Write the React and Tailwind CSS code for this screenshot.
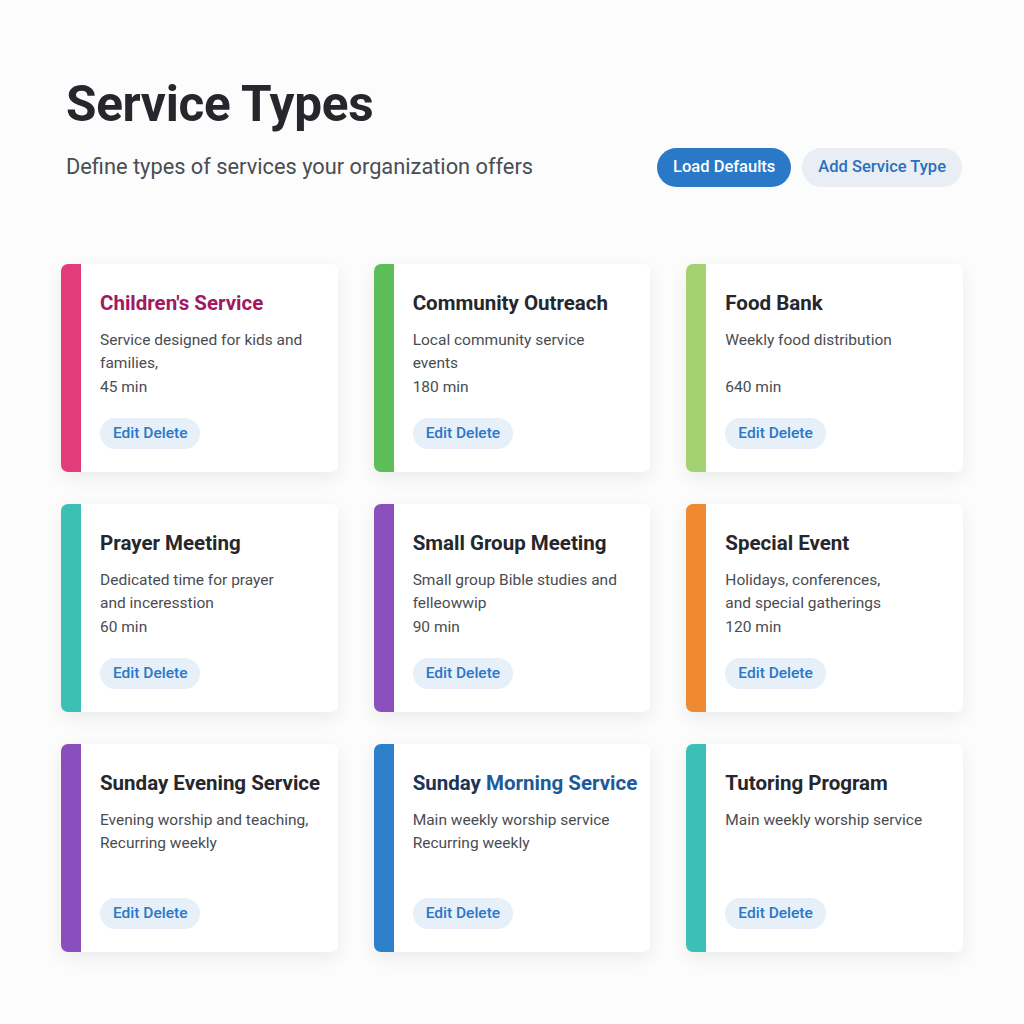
import React from "react";

const services = [
  { name: "Children's Service", desc: ["Service designed for kids and", "families,"], mins: "45 min", bar: "bg-[#e33c7d]", title: "text-[#a2195f]" },
  { name: "Community Outreach", desc: ["Local community service", "events"], mins: "180 min", bar: "bg-[#5dbd58]" },
  { name: "Food Bank", desc: ["Weekly food distribution"], mins: "640 min", bar: "bg-[#a4d272]" },
  { name: "Prayer Meeting", desc: ["Dedicated time for prayer", "and inceresstion"], mins: "60 min", bar: "bg-[#3cc0b6]" },
  { name: "Small Group Meeting", desc: ["Small group Bible studies and", "felleowwip"], mins: "90 min", bar: "bg-[#8b50be]" },
  { name: "Special Event", desc: ["Holidays, conferences,", "and special gatherings"], mins: "120 min", bar: "bg-[#ef8a33]" },
  { name: "Sunday Evening Service", desc: ["Evening worship and teaching,", "Recurring weekly"], bar: "bg-[#8a4fbd]" },
  { name: "Sunday Morning Service", desc: ["Main weekly worship service", "Recurring weekly"], bar: "bg-[#2b80c9]", split: true },
  { name: "Tutoring Program", desc: ["Main weekly worship service"], bar: "bg-[#3cbfb7]" },
];

function ServiceCard({ s }) {
  return (
    <div className="flex h-[208px] rounded-[7px] bg-white shadow-[0_6px_18px_rgba(0,0,0,0.07)] overflow-hidden">
      <div className={`w-[20px] shrink-0 ${s.bar}`} />
      <div className="flex flex-1 flex-col pl-[19px] pr-3 pt-[27px] pb-[23px]">
        <h2 className={`text-[20.5px] leading-[24px] font-bold ${s.title || "text-[#25272c]"}`}>
          {s.split ? (
            <>
              <span className="text-[#1e3352]">Sunday </span>
              <span className="text-[#1b5b9b]">Morning Service</span>
            </>
          ) : (
            s.name
          )}
        </h2>
        <div className="mt-[14px] h-[45px] text-[15.5px] leading-[22.5px] text-[#4a4c51]">
          {s.desc.map((line) => (
            <div key={line}>{line}</div>
          ))}
        </div>
        {s.mins && <div className="mt-[2px] text-[15.5px] leading-[22px] text-[#4a4c51]">{s.mins}</div>}
        <div className="mt-auto">
          <button className="h-[31px] rounded-full bg-[#e7eff8] px-[13px] text-[15.5px] font-medium text-[#2a78c8]">
            Edit Delete
          </button>
        </div>
      </div>
    </div>
  );
}

export default function App() {
  return (
    <div className="min-h-screen bg-[#fcfcfc] font-['Roboto',sans-serif] antialiased">
      <div className="px-[61px] pt-[75px] pb-16">
        {/* header */}
        <div className="pl-[5px]">
          <h1 className="text-[49.5px] leading-[58px] font-bold tracking-[-0.3px] text-[#25272c]">Service Types</h1>
          <div className="mt-[15px] flex items-center justify-between pr-[1px]">
            <p className="text-[21.8px] text-[#4a4d52]">Define types of services your organization offers</p>
            <div className="flex gap-[11px]">
              <button className="h-[39px] rounded-full bg-[#2a78c8] px-[16px] text-[16.5px] font-medium text-white">
                Load Defaults
              </button>
              <button className="h-[39px] rounded-full bg-[#e9eef5] px-[16px] text-[16.5px] font-medium text-[#2a6fc0]">
                Add Service Type
              </button>
            </div>
          </div>
        </div>

        {/* cards */}
        <div className="mt-[77px] grid grid-cols-3 gap-x-[36px] gap-y-[32px]">
          {services.map((s) => (
            <ServiceCard key={s.name} s={s} />
          ))}
        </div>
      </div>
    </div>
  );
}
